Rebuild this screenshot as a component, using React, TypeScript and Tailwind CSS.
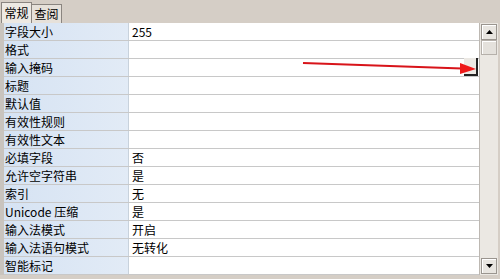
const rows: [string, string][] = [
  ['字段大小', '255'],
  ['格式', ''],
  ['输入掩码', ''],
  ['标题', ''],
  ['默认值', ''],
  ['有效性规则', ''],
  ['有效性文本', ''],
  ['必填字段', '否'],
  ['允许空字符串', '是'],
  ['索引', '无'],
  ['Unicode 压缩', '是'],
  ['输入法模式', '开启'],
  ['输入法语句模式', '无转化'],
  ['智能标记', ''],
];

function Arrow({ dir }: { dir: 'up' | 'down' }) {
  return (
    <svg width="7" height="4" viewBox="0 0 7 4">
      {dir === 'up' ? <polygon points="0,4 7,4 3.5,0" fill="#000" /> : <polygon points="0,0 7,0 3.5,4" fill="#000" />}
    </svg>
  );
}

export default function App() {
  return (
    <div
      className="relative h-[279px] w-[500px] overflow-hidden bg-[#d5cec6] text-[12px] text-black"
      style={{ fontFamily: '"Noto Sans CJK SC", "Liberation Sans", sans-serif' }}
    >
      {/* tabs */}
      <div className="flex h-[23px] items-end pl-[1px]">
        <div className="flex h-[21px] w-[31px] items-center justify-center border border-b-0 border-[#8a8580] bg-[#ede9e3] leading-none">
          常规
        </div>
        <div className="flex h-[19px] w-[30px] items-center justify-center border border-b-0 border-l-0 border-[#8a8580] bg-[#e6e1da] leading-none">
          查阅
        </div>
      </div>

      <div className="flex h-[252px] border-l-[4px] border-[#c9c4be]">
        {/* grid */}
        <div className="flex w-[475px] flex-col bg-white">
          {rows.map(([k, v], i) => (
            <div key={i} className="flex h-[18px] border-b border-[#c8c8c8]">
              <div className="flex w-[125px] items-center border-r border-[#c8d2dc] bg-gradient-to-r from-[#d6e3f3] to-[#e2ebf6] pl-[1px] leading-none">
                {k}
              </div>
              <div className="relative flex flex-1 items-center pl-[3px] leading-none">
                {v}
                {i === 2 && (
                  <div className="absolute right-[1px] top-[-1px] h-[18px] w-[14px] border-r-2 border-b-2 border-[#222] bg-[#ece9e4]" />
                )}
              </div>
            </div>
          ))}
        </div>
        {/* scrollbar */}
        <div className="flex w-[19px] flex-col border-l border-[#bdb8b2] bg-[#ebe8e3] px-[1px] pt-[1px]">
          <div className="flex h-[16px] items-center justify-center border border-[#9a958f] bg-[#e8e5e0] shadow-[inset_1px_1px_0_#fff]">
            <Arrow dir="up" />
          </div>
          <div className="h-[15px] border border-[#b5b0aa] bg-[#e4e1dc] shadow-[inset_1px_1px_0_#fff]" />
          <div className="flex-1" />
          <div className="mb-[1px] flex h-[16px] items-center justify-center border border-[#9a958f] bg-[#e8e5e0] shadow-[inset_1px_1px_0_#fff]">
            <Arrow dir="down" />
          </div>
        </div>
      </div>

      {/* red arrow */}
      <svg className="pointer-events-none absolute left-0 top-0" width="500" height="279">
        <line x1="303" y1="63" x2="462" y2="68.5" stroke="#d8141a" strokeWidth="2.2" />
        <polygon points="460,63 476,69 460,74" fill="#ee1a1a" />
      </svg>
    </div>
  );
}
